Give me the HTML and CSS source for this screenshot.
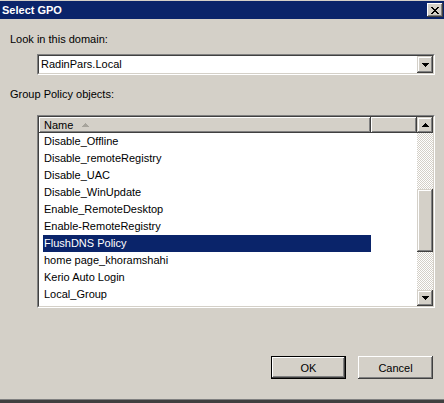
FILE: index.html
```html
<!DOCTYPE html>
<html>
<head>
<meta charset="utf-8">
<link rel="stylesheet" href="styles.css">
</head>
<body>
<div class="window">
  <div class="titlebar">
    <span class="title">Select GPO</span>
    <span class="close"><svg width="8" height="7" viewBox="0 0 8 7"><path d="M0 0h2v1h1v1h2v-1h1v-1h2v1h-1v1h-1v1h-1v1h1v1h1v1h1v1h-2v-1h-1v-1h-2v1h-1v1h-2v-1h1v-1h1v-1h1v-1h-1v-1h-1v-1h-1z" fill="#000"/></svg></span>
  </div>
  <div class="label first">Look in this domain:</div>
  <div class="field combo">
    <div class="field-in combo-in">
      <span class="combo-text">RadinPars.Local</span>
      <span class="sbtn combo-btn"><svg width="7" height="4" viewBox="0 0 7 4"><path d="M0 0h7v1h-1v1h-1v1h-1v1h-1v-1h-1v-1h-1v-1h-1z" fill="#000"/></svg></span>
    </div>
  </div>
  <div class="label second">Group Policy objects:</div>
  <div class="field list">
    <div class="field-in list-in">
      <div class="list-main">
        <div class="header">
          <div class="hcell name">Name <svg class="sort" width="7" height="4" viewBox="0 0 7 4"><path d="M3 0h1v1h1v1h1v1h1v1h-7v-1h1v-1h1v-1h1z" fill="#a7a49c"/></svg></div>
          <div class="hcell rest"></div>
        </div>
        <div class="rows">
          <div class="row">Disable_Offline</div>
          <div class="row">Disable_remoteRegistry</div>
          <div class="row">Disable_UAC</div>
          <div class="row">Disable_WinUpdate</div>
          <div class="row">Enable_RemoteDesktop</div>
          <div class="row">Enable-RemoteRegistry</div>
          <div class="row sel">FlushDNS Policy</div>
          <div class="row">home page_khoramshahi</div>
          <div class="row">Kerio Auto Login</div>
          <div class="row">Local_Group</div>
        </div>
      </div>
      <div class="vscroll">
        <span class="sbtn"><svg width="7" height="4" viewBox="0 0 7 4"><path d="M3 0h1v1h1v1h1v1h1v1h-7v-1h1v-1h1v-1h1z" fill="#000"/></svg></span>
        <div class="track"><div class="thumb"></div></div>
        <span class="sbtn"><svg width="7" height="4" viewBox="0 0 7 4"><path d="M0 0h7v1h-1v1h-1v1h-1v1h-1v-1h-1v-1h-1v-1h-1z" fill="#000"/></svg></span>
      </div>
    </div>
  </div>
  <div class="buttons">
    <button class="btn default">OK</button>
    <button class="btn">Cancel</button>
  </div>
</div>
</body>
</html>
```
FILE: styles.css
```css
html, body {
  margin: 0;
  padding: 0;
  background: #d4d0c8;
}
.window {
  width: 444px;
  height: 403px;
  box-sizing: border-box;
  background: #d4d0c8;
  padding-top: 1px;
  border-bottom: 3px solid #404040;
  box-shadow: inset 0 -1px #808080;
  display: flex;
  flex-direction: column;
  font-family: "Liberation Sans", Arial, sans-serif;
  font-size: 11px;
  color: #000;
}
.titlebar {
  height: 18px;
  background: #0a246a;
  display: flex;
  align-items: center;
  justify-content: space-between;
  padding-left: 2px;
  padding-right: 1px;
}
.title {
  color: #fff;
  font-weight: bold;
  font-size: 11px;
  line-height: 18px;
}
.close {
  width: 16px;
  height: 14px;
  box-sizing: border-box;
  background: #d4d0c8;
  box-shadow: inset -1px -1px #404040, inset 1px 1px #fff, inset -2px -2px #808080;
  display: flex;
  align-items: center;
  justify-content: center;
  padding-right: 1px;
}
.close svg { display: block; }
.label {
  margin-left: 10px;
  line-height: 13px;
}
.label.first { margin-top: 14px; }
.label.second { margin-top: 13px; }
.field {
  margin-left: 37px;
  width: 398px;
  box-sizing: border-box;
  border: 1px solid;
  border-color: #808080 #fff #fff #808080;
}
.field-in {
  height: 100%;
  box-sizing: border-box;
  border: 1px solid;
  border-color: #404040 #d4d0c8 #d4d0c8 #404040;
  background: #fff;
}
.combo {
  margin-top: 8px;
  height: 21px;
}
.combo-in {
  display: flex;
  align-items: stretch;
}
.combo-text {
  flex: 1;
  padding-left: 2px;
  line-height: 17px;
}
.sbtn {
  width: 16px;
  height: 16px;
  box-sizing: border-box;
  background: #d4d0c8;
  box-shadow: inset -1px -1px #404040, inset 1px 1px #d4d0c8, inset -2px -2px #808080, inset 2px 2px #fff;
  display: flex;
  align-items: center;
  justify-content: center;
  flex: none;
}
.sbtn svg { display: block; }
.combo-btn { height: 17px; }
.list {
  margin-top: 14px;
  height: 193px;
}
.list-in {
  display: flex;
}
.list-main {
  flex: 1;
  display: flex;
  flex-direction: column;
}
.header {
  height: 16px;
  display: flex;
}
.hcell {
  height: 16px;
  box-sizing: border-box;
  background: #d4d0c8;
  box-shadow: inset -1px -1px #404040, inset 1px 1px #fff, inset -2px -2px #808080;
  line-height: 16px;
}
.hcell.name {
  width: 332px;
  padding-left: 5px;
  display: flex;
  align-items: center;
  gap: 0;
}
.sort { margin-left: 9px; display: block; }
.hcell.rest { flex: 1; }
.rows { display: flex; flex-direction: column; }
.row {
  height: 17px;
  line-height: 17px;
  margin-left: 4px;
  width: 328px;
  padding-left: 1px;
  box-sizing: border-box;
  white-space: nowrap;
}
.row.sel {
  background: #0a246a;
  color: #fff;
}
.vscroll {
  width: 16px;
  display: flex;
  flex-direction: column;
}
.track {
  flex: 1;
  background: repeating-conic-gradient(#fff 0 25%, #d4d0c8 0 50%) 0 0 / 2px 2px;
}
.thumb {
  margin-top: 56px;
  height: 63px;
  background: #d4d0c8;
  box-shadow: inset -1px -1px #404040, inset 1px 1px #d4d0c8, inset -2px -2px #808080, inset 2px 2px #fff;
}
.buttons {
  margin-top: 48px;
  display: flex;
  justify-content: flex-end;
  gap: 12px;
  padding-right: 11px;
}
.btn {
  width: 75px;
  height: 23px;
  margin: 0;
  padding: 0;
  border: none;
  background: #d4d0c8;
  font-family: "Liberation Sans", Arial, sans-serif;
  font-size: 11px;
  color: #000;
  box-shadow: inset -1px -1px #404040, inset 1px 1px #fff, inset -2px -2px #808080;
}
.btn.default {
  box-shadow: inset 0 0 0 1px #000, inset -2px -2px #404040, inset 2px 2px #fff, inset -3px -3px #808080;
}
```
